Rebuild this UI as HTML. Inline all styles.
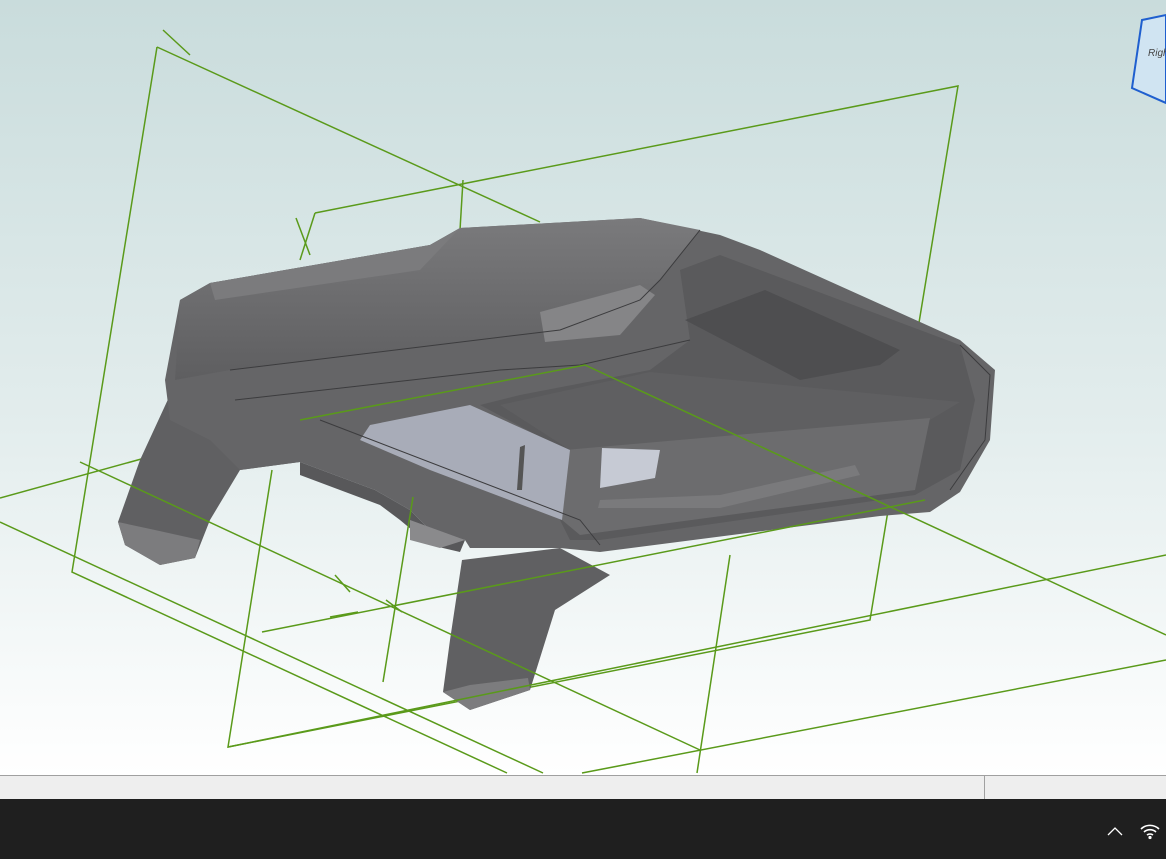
<!DOCTYPE html>
<html><head><meta charset="utf-8"><style>
html,body{margin:0;padding:0;width:1166px;height:859px;overflow:hidden;font-family:"Liberation Sans",sans-serif}
</style></head><body>
<svg width="1166" height="859" viewBox="0 0 1166 859" xmlns="http://www.w3.org/2000/svg">
<defs>
<linearGradient id="bg" x1="0" y1="0" x2="0" y2="1">
<stop offset="0" stop-color="#c9dcdc"/><stop offset="0.55" stop-color="#e3eded"/><stop offset="1" stop-color="#ffffff"/>
</linearGradient>
<linearGradient id="top" x1="0" y1="0" x2="0" y2="1">
<stop offset="0" stop-color="#7a7a7c"/><stop offset="1" stop-color="#5e5e60"/>
</linearGradient>
</defs>
<rect width="1166" height="775" fill="url(#bg)"/>
<!-- back green lines -->
<g stroke="#5a9a1a" stroke-width="1.5" fill="none">
<polyline points="157,47 540,222"/>
<polyline points="157,47 72,572 507,773"/>
<polyline points="315,213 958,86 870,620 228,747 272,470"/>
<polyline points="315,213 300,260"/>
<line x1="463" y1="180" x2="460" y2="230"/>
<line x1="0" y1="498" x2="210" y2="440"/>
</g>
<!-- left leg -->
<path d="M170,395 L140,460 L118,522 L125,545 L160,565 L195,558 L210,520 L240,470 L300,462 L305,430 L250,410 Z" fill="#606062"/>
<path d="M118,522 L125,545 L160,565 L195,558 L200,540 L155,530 Z" fill="#7c7c7e"/>
<!-- bottom leg -->
<path d="M462,560 L450,640 L443,692 L470,710 L530,690 L555,610 L610,575 L560,548 Z" fill="#606062"/>
<path d="M443,692 L470,710 L530,690 L528,678 L470,685 Z" fill="#7c7c7e"/>
<!-- main body -->
<path d="M180,300 L210,283 L430,245 L460,228 L640,218 L720,235 L760,250 L960,340 L995,370 L990,440 L960,492 L930,512 L880,516 L600,552 L560,548 L470,548 L465,540 L430,530 L410,510 L375,490 L300,462 L240,470 L210,440 L170,420 L165,380 Z" fill="#656567"/>
<path d="M180,300 L210,283 L430,245 L460,228 L640,218 L700,230 L660,280 L640,300 L560,330 L400,350 L230,370 L175,380 Z" fill="url(#top)"/>
<path d="M210,283 L430,245 L460,228 L420,270 L215,300 Z" fill="#7b7b7d"/>
<path d="M540,312 L640,285 L655,295 L620,335 L545,342 Z" fill="#858587"/>
<!-- interior cavity -->
<path d="M680,270 L720,255 L960,345 L975,400 L960,470 L915,495 L880,500 L600,540 L570,540 L560,520 L565,450 L480,405 L520,395 L650,370 L690,340 Z" fill="#5a5a5c"/>
<path d="M685,320 L765,290 L900,350 L880,365 L800,380 Z" fill="#4e4e50"/>
<path d="M500,405 L650,372 L960,402 L930,420 L570,450 Z" fill="#5f5f61"/>
<path d="M565,450 L930,418 L915,490 L580,535 L562,520 Z" fill="#6c6c6e"/>
<path d="M370,425 L470,405 L570,450 L562,520 L430,470 L360,440 Z" fill="#a8acb8"/>
<path d="M602,448 L660,450 L655,478 L600,488 Z" fill="#c6cad4"/>
<path d="M520,447 L525,445 L522,490 L517,490 Z" fill="#555"/>
<path d="M598,508 L720,508 L860,475 L855,465 L720,495 L600,500 Z" fill="#7a7a7c"/>
<path d="M300,462 L375,490 L410,510 L430,530 L465,540 L460,552 L430,545 L400,520 L380,505 L300,475 Z" fill="#58585a"/>
<path d="M410,520 L465,540 L440,548 L410,540 Z" fill="#8a8a8c"/>
<!-- edges -->
<g stroke="#3c3c3e" stroke-width="1" fill="none">
<path d="M230,370 L560,330 L640,300 L660,280 L700,230"/>
<path d="M235,400 L500,370 L580,365 L690,340"/>
<path d="M320,420 L580,520 L600,545"/>
<path d="M960,345 L990,375 L985,440 L950,490"/>
</g>
<!-- front green lines -->
<g stroke="#5a9a1a" stroke-width="1.5" fill="none">
<polyline points="80,462 700,750"/>
<line x1="0" y1="522" x2="543" y2="773"/>
<polyline points="300,420 585,365 1166,635"/>
<line x1="262" y1="632" x2="925" y2="500"/>
<line x1="228" y1="747" x2="1166" y2="555"/>
<line x1="582" y1="773" x2="1166" y2="660"/>
<line x1="730" y1="555" x2="697" y2="773"/>
<line x1="413" y1="497" x2="383" y2="682"/>
<line x1="330" y1="617" x2="358" y2="612"/>
<line x1="335" y1="575" x2="350" y2="592"/>
<line x1="386" y1="600" x2="402" y2="612"/>
<line x1="163" y1="30" x2="190" y2="55"/>
<line x1="296" y1="218" x2="310" y2="255"/>
</g>
<!-- view cube -->
<path d="M1142,20 L1166,15 L1166,103 L1132,88 Z" fill="#d0e4f2" stroke="#1f5fcf" stroke-width="2"/>
<text x="1148" y="56" font-size="10" font-style="italic" fill="#444">Righ</text>
<!-- status bar -->
<rect y="775" width="1166" height="24" fill="#eeeeee"/>
<line x1="0" y1="775.5" x2="1166" y2="775.5" stroke="#a0a0a0"/>
<line x1="984.5" y1="775" x2="984.5" y2="799" stroke="#a0a0a0"/>
<rect y="799" width="1166" height="60" fill="#1f1f1f"/>
<polyline points="1108,835 1115,828 1122,835" fill="none" stroke="#fff" stroke-width="1.3"/>
<g fill="none" stroke="#fff" stroke-width="1.6">
<path d="M1141,829 A13,13 0 0 1 1159,829"/>
<path d="M1144,832 A9,9 0 0 1 1156,832"/>
<path d="M1147,835 A5,5 0 0 1 1153,835"/>
</g>
<circle cx="1150" cy="837.5" r="1.6" fill="#fff"/>
</svg>
</body></html>
